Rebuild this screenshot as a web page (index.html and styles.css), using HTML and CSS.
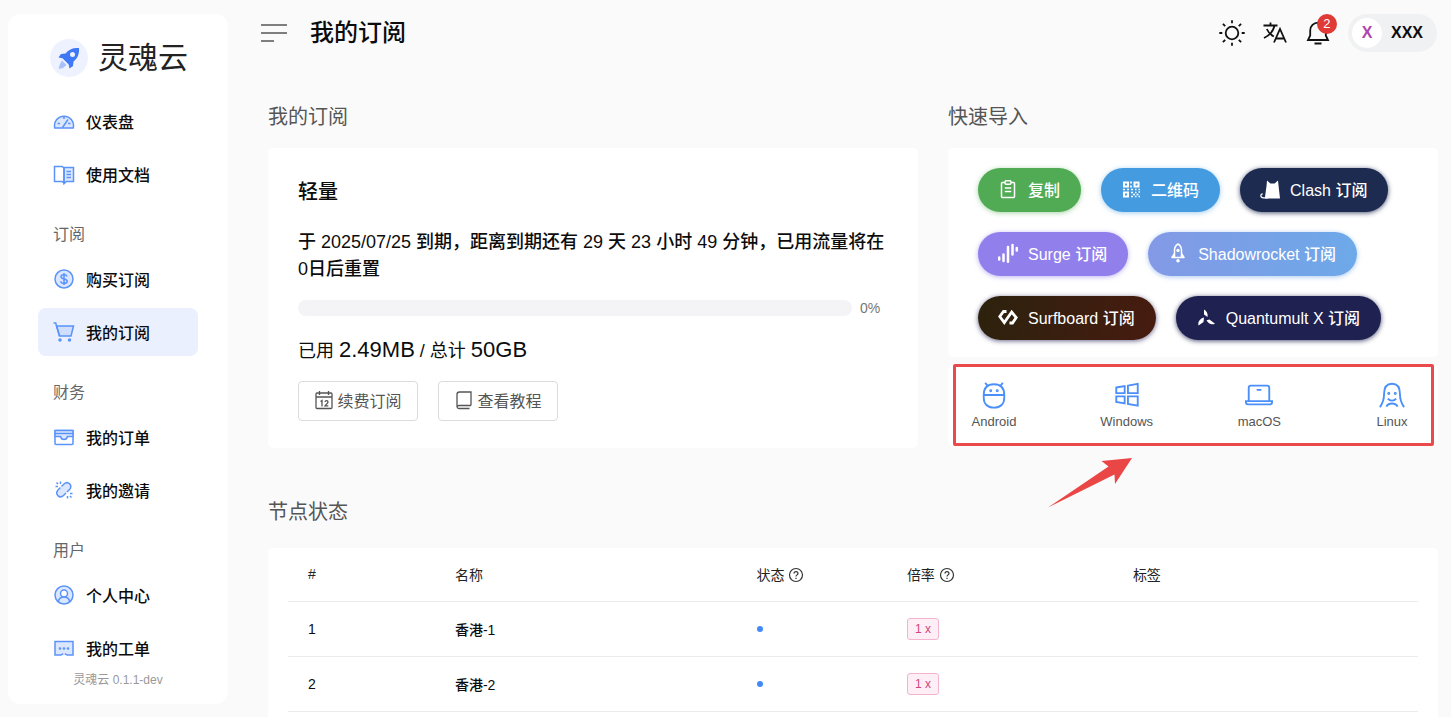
FILE: index.html
```
<!DOCTYPE html>
<html lang="zh-CN">
  <head>
    <meta charset="UTF-8" />
    <meta name="viewport" content="width=device-width, initial-scale=1.0" />
    <title>我的订阅 - 灵魂云</title>
    <link rel="stylesheet" href="styles.css">
  </head>
  <body>
    <div class="app">
      <aside class="sidebar">
        <div class="brand">
          <span class="brand-logo">
            <svg width="24" height="24" viewBox="0 0 24 24">
              <path d="M22 2C16 1.500 11.500 3.500 8.500 7.500L4 8l-2.500 3.500 4 .8L11.700 18.500l.8 4L16 20l.5-4.500C20.500 12.500 22.500 8 22 2z" fill="#3f78f5" />
              <circle cx="15.500" cy="8.500" r="2.500" fill="#eef2fe" />
              <path d="M5 14.500l4.500 4.500L6 22l-4.500 1L3 18z" fill="#a9c1fb" />
            </svg>
          </span>
          <span class="brand-name">灵魂云</span>
        </div>

        <nav class="menu">
          <a class="menu-item" href="#">
            <svg class="menu-icon" viewBox="0 0 22 22">
              <path d="M1.800 18a9.500 9.500 0 1 1 18.400 0z" />
              <path d="M11 6v3M4.500 13.500h2.500M15 13.500h2.500M9.500 17.500l5.500-8" />
            </svg>
            仪表盘
          </a>
          <a class="menu-item" href="#">
            <svg class="menu-icon" viewBox="0 0 22 22">
              <path d="M11 4.500h9.500v14h-7L11 20.500z" />
              <path d="M1.500 3.500h7.500l2 1.500v15l-2-1.500H1.500z" fill="none" />
              <path d="M13.500 8.500h4.500M13.500 11.500h4.500M13.500 14.500h4.500" />
            </svg>
            使用文档
          </a>

          <h3 class="menu-group">订阅</h3>
          <a class="menu-item" href="#">
            <svg class="menu-icon" viewBox="0 0 22 22">
              <circle cx="11" cy="11" r="9" />
              <path d="M14 8.500c-.3-1.200-1.400-1.800-3-1.800-1.800 0-3 .8-3 2.100 0 3 6.200 1.400 6.200 4.400 0 1.300-1.300 2.200-3.200 2.200s-3-.8-3.300-2.100M11 5v12" fill="none" />
            </svg>
            购买订阅
          </a>
          <a class="menu-item active" href="#" aria-current="page">
            <svg class="menu-icon" viewBox="0 0 22 22">
              <path class="basket" d="M3.500 5h17l-2.500 10H6.500z" />
              <path d="M.5 2h2.200L6.500 15" fill="none" />
              <circle class="solid" cx="7" cy="19" r="1" />
              <circle class="solid" cx="16.500" cy="19" r="1" />
            </svg>
            我的订阅
          </a>

          <h3 class="menu-group">财务</h3>
          <a class="menu-item" href="#">
            <svg class="menu-icon" viewBox="0 0 22 22">
              <rect x="2" y="4.500" width="18" height="14" rx="1" fill="none" />
              <path d="M2 4.500h18v6h-5.500c-.5 2-1.800 3-3.500 3s-3-1-3.500-3H2zM2 7.500h18" />
            </svg>
            我的订单
          </a>
          <a class="menu-item" href="#">
            <svg class="menu-icon" viewBox="0 0 22 22">
              <path class="link-fill" d="M6 16L16 6" />
              <path d="M8.500 7.500l2.500-2.500c4-3.600 9 1.400 5.500 5.500l-2.500 2.500M13 14l-2.500 2.500c-4 3.600-9-1.400-5.500-5.500l2.500-2.500" fill="none" />
              <path d="M7.500 2.500v2.500M2.500 7.500H5M14.500 19.500V17M19.500 14.500H17M18.500 18.500l-1.500-1.500M3.500 3.500L5 5" />
            </svg>
            我的邀请
          </a>

          <h3 class="menu-group">用户</h3>
          <a class="menu-item" href="#">
            <svg class="menu-icon" viewBox="0 0 22 22">
              <circle cx="11" cy="11" r="9" />
              <circle cx="11" cy="9.500" r="3.500" fill="#ffffff" />
              <path d="M5.200 17.800c.6-2.900 2.800-4.800 5.800-4.800s5.200 1.900 5.800 4.800" fill="none" />
            </svg>
            个人中心
          </a>
          <a class="menu-item" href="#">
            <svg class="menu-icon" viewBox="0 0 22 22">
              <path d="M8.500 18H2V4.500h18V18h-6.500M8.500 18l1.500-1.500M13.500 18L12 16.500" />
              <circle class="solid" cx="7" cy="11.500" r=".6" />
              <circle class="solid" cx="11" cy="11.500" r=".6" />
              <circle class="solid" cx="15" cy="11.500" r=".6" />
            </svg>
            我的工单
          </a>
        </nav>
        <p class="version">灵魂云 0.1.1-dev</p>
      </aside>

      <div class="main">
        <header class="topbar">
          <button class="icon-btn" aria-label="折叠菜单">
            <svg width="26" height="20" viewBox="0 0 26 20" fill="none" stroke="#555" stroke-width="1.500">
              <path d="M0 2h26M0 10h26M0 18h13" />
            </svg>
          </button>
          <h1 class="page-title">我的订阅</h1>
          <div class="tools">
            <button class="icon-btn" aria-label="切换主题">
              <svg class="tool-icon" viewBox="0 0 26 26">
                <circle cx="13" cy="13" r="6.300" />
                <path d="M13 .3v3M13 22.700v3M.3 13h3M22.700 13h3M3.900 3.900l2.300 2.300M19.800 19.800l2.300 2.300M22.100 3.900l-2.300 2.300M6.200 19.800l-2.300 2.300" />
              </svg>
            </button>
            <button class="icon-btn" aria-label="语言">
              <svg class="tool-icon" viewBox="0 0 26 26">
                <path d="M1.500 5.500h14M8.500 2.500v3M12.500 5.500c-1 5-4.500 9.500-10.500 12.500M4.800 9c1.500 3.500 4 5.800 7 7.500M12 22.500l6-13.500 6 13.500M14 18.500h8" />
              </svg>
            </button>
            <button class="icon-btn bell" aria-label="通知">
              <svg class="tool-icon" viewBox="0 0 26 26">
                <path d="M3 20h20l-2.200-4.500V10.500a7.800 7.800 0 0 0-15.600 0v5zM9.500 23.500h7" />
              </svg>
              <span class="badge">2</span>
            </button>
            <button class="user">
              <span class="avatar">X</span>
              <span>XXX</span>
            </button>
          </div>
        </header>

        <main class="content">
          <div class="columns">
            <section>
              <h2 class="section-title">我的订阅</h2>
              <div class="card plan">
                <h3 class="plan-name">轻量</h3>
                <p class="plan-info">于 2025/07/25 到期，距离到期还有 29 天 23 小时 49 分钟，已用流量将在 0日后重置</p>
                <div class="usage">
                  <div class="usage-bar" role="progressbar" aria-valuenow="0" aria-valuemin="0" aria-valuemax="100"></div>
                  <span class="usage-percent">0%</span>
                </div>
                <p class="traffic">已用 <span>2.49MB</span> / 总计 <span>50GB</span></p>
                <div class="plan-actions">
                  <button class="outline-btn">
                    <svg width="20" height="20" viewBox="0 0 20 20" fill="none" stroke="currentColor" stroke-width="1.300">
                      <rect x="2" y="3" width="16" height="15.500" rx="1" />
                      <path d="M2 7h16M5.500 1v4M14.500 1v4M6.500 11.500l1.500-1v6M11 12c.3-1.800 3-1.600 3 0 0 1.200-2 2.300-3 3.900h3.300" />
                    </svg>
                    续费订阅
                  </button>
                  <button class="outline-btn">
                    <svg width="20" height="20" viewBox="0 0 20 20" fill="none" stroke="currentColor" stroke-width="1.300">
                      <path d="M17 15.500V2H5.500C4 2 3 3 3 4.500V17M17 15.500H5c-2.500 0-2.500 3 0 3h10.500" />
                    </svg>
                    查看教程
                  </button>
                </div>
              </div>
            </section>

            <section>
              <h2 class="section-title">快速导入</h2>
              <div class="card import">
                <button class="pill copy">
                  <svg width="20" height="20" viewBox="0 0 20 20" fill="none" stroke="currentColor" stroke-width="1.500">
                    <path d="M7 3.500H4.500a1 1 0 0 0-1 1v13a1 1 0 0 0 1 1h11a1 1 0 0 0 1-1v-13a1 1 0 0 0-1-1H13" />
                    <rect x="7" y="1.800" width="6" height="3.400" rx="1.200" />
                    <path d="M6.800 9h6.400M6.800 12.500h6.400" />
                  </svg>
                  复制
                </button>
                <button class="pill qrcode">
                  <svg width="20" height="20" viewBox="0 0 20 20" fill="none" stroke="currentColor" stroke-width="2">
                    <path d="M3 3.500h4v4H3zM13.500 3.500h4v4h-4zM3 13.500h4v4H3z" />
                    <path d="M10 2.500v2M10 6.500v2M2 10.500h2M6 10.500h2M10 10.500h2M14 10.500h1.500M17.500 10.500H19M10 13.500h2M14 13.500h1.500M12 15.500h2M15.500 15.500h2M10 17.500h2M14 17.500h1.500M17.500 17.500H19M17.500 13H19" stroke-width="1.700" />
                  </svg>
                  二维码
                </button>
                <button class="pill clash">
                  <svg width="20" height="20" viewBox="0 0 20 20">
                    <path d="M4.800 19.500L6.500 7 7 1.500l3.400 3h4.200L18 1.500l.6 5.500 1.400 12.500z" fill="currentColor" />
                    <path d="M8 18.800H3.500c-3.300 0-3.600-3.800-.8-4" fill="none" stroke="currentColor" stroke-width="1.200" />
                  </svg>
                  Clash 订阅
                </button>
                <button class="pill surge">
                  <svg width="20" height="20" viewBox="0 0 20 20" fill="none" stroke="currentColor" stroke-width="2.500" stroke-linecap="round">
                    <path d="M1.200 14.500v2M5.500 11.500v6.500M10 4v14.800M14.500 2v9.500M18.800 5v2.500" />
                  </svg>
                  Surge 订阅
                </button>
                <button class="pill shadowrocket">
                  <svg width="20" height="20" viewBox="0 0 20 20" fill="none" stroke="currentColor" stroke-width="1.500" stroke-linejoin="round">
                    <path d="M6.500 12.500V7c0-2.600 1.300-4.600 3.500-6 2.200 1.400 3.500 3.400 3.500 6v5.500M6.500 10.500L4 14.500h12l-2.500-4M6.500 10.500v4M13.500 10.500v4" />
                    <circle cx="10" cy="7.500" r="1" fill="currentColor" />
                    <circle cx="10" cy="17.800" r="1" fill="currentColor" />
                  </svg>
                  Shadowrocket 订阅
                </button>
                <button class="pill surfboard">
                  <svg width="20" height="20" viewBox="0 0 20 20" fill="none" stroke="currentColor" stroke-width="2.800">
                    <path d="M8.500 4.500H5.500L1.800 9.500l4.500 6L13.700 5l4.500 5.500-3.700 5.500h-3" />
                  </svg>
                  Surfboard 订阅
                </button>
                <button class="pill quantumult">
                  <svg width="20" height="20" viewBox="0 0 20 20" fill="currentColor">
                    <path d="M8 2.500c2.500 1.500 4 3.500 3.600 7.500L8 7.500zM8 10.500L7.500 15 2.500 18.500c-.8-3.800 1-6.500 5.500-8zM10.500 13.300l3-.8 5.500 4.200c-3.500 1.300-6.300.5-8.500-3.400z" />
                  </svg>
                  Quantumult X 订阅
                </button>
              </div>

              <div class="card platforms">
                <a class="platform" href="#">
                  <svg class="platform-icon" viewBox="0 0 30 30">
                    <path d="M4 15C4 7.500 8 3.500 15 3.500S26 7.500 26 15v3c0 6.500-4 10.500-11 10.500S4 24.500 4 18zM4 15h22M8.500 5.500L5.500 2M21.500 5.500l3-3.500" />
                    <circle class="solid" cx="11.500" cy="10.500" r=".6" />
                    <circle class="solid" cx="18.500" cy="10.500" r=".6" />
                  </svg>
                  Android
                </a>
                <a class="platform" href="#">
                  <svg class="platform-icon" viewBox="0 0 30 30">
                    <path d="M3.500 7l9-1.500V13h-9zM16 5l10.500-2v10H16zM3.500 16.500h9V24l-9-1.500zM16 16.500h10.500v10L16 24.500z" />
                  </svg>
                  Windows
                </a>
                <a class="platform" href="#">
                  <svg class="platform-icon" viewBox="0 0 30 30">
                    <path d="M4 21.500V7.500c0-1.500.8-2.500 2.300-2.500h17.400c1.500 0 2.300 1 2.300 2.500v14M1 21.500h28v1.300c0 1.500-.7 2.200-2.200 2.200H3.200C1.700 25 1 24.300 1 22.800zM12.500 9.500h5" />
                  </svg>
                  macOS
                </a>
                <a class="platform" href="#">
                  <svg class="platform-icon" viewBox="0 0 30 30">
                    <path d="M2 28c3-4 4.500-8.500 4.500-14C6.500 6.500 9.500 3 15 3s8.500 3.500 8.500 11c0 5.500 1.500 10 4.500 14M10.500 19c2.500 2.700 6.500 2.700 9 0M9 27.500c2-4.500 10-4.500 12 0" />
                    <circle class="solid" cx="11.500" cy="13.500" r=".6" />
                    <circle class="solid" cx="18.500" cy="13.500" r=".6" />
                  </svg>
                  Linux
                </a>
                <div class="highlight"></div>
                <svg class="arrow" width="84" height="50" viewBox="0 0 84 50">
                  <path d="M0 49.500L60.500 8.500 53.500 3 84 0 67 26 66.500 16.500z" fill="#ea4646" />
                </svg>
              </div>
            </section>
          </div>

          <section class="nodes">
            <h2 class="section-title">节点状态</h2>
            <div class="card node-card">
              <table class="node-table">
                <thead>
                  <tr>
                    <th class="col-id">#</th>
                    <th class="col-name">名称</th>
                    <th class="col-status">
                      状态
                      <svg class="help" viewBox="0 0 16 16">
                        <circle cx="8" cy="8" r="6.500" />
                        <path d="M6 6.500c0-2.600 4-2.600 4 0 0 1.300-2 1.500-2 3M8 10.800V12" />
                      </svg>
                    </th>
                    <th class="col-rate">
                      倍率
                      <svg class="help" viewBox="0 0 16 16">
                        <circle cx="8" cy="8" r="6.500" />
                        <path d="M6 6.500c0-2.600 4-2.600 4 0 0 1.300-2 1.500-2 3M8 10.800V12" />
                      </svg>
                    </th>
                    <th>标签</th>
                  </tr>
                </thead>
                <tbody>
                  <tr>
                    <td>1</td>
                    <td>香港-1</td>
                    <td><span class="dot"></span></td>
                    <td><span class="rate">1 x</span></td>
                    <td></td>
                  </tr>
                  <tr>
                    <td>2</td>
                    <td>香港-2</td>
                    <td><span class="dot"></span></td>
                    <td><span class="rate">1 x</span></td>
                    <td></td>
                  </tr>
                </tbody>
              </table>
            </div>
          </section>
        </main>
      </div>
    </div>
  </body>
</html>
```

FILE: styles.css
```
* {
  box-sizing: border-box;
}

body {
  margin: 0;
  font-family: "Liberation Sans", "Noto Sans CJK SC", sans-serif;
  font-size: 16px;
  color: #0c0c0d;
  background-color: #fafafb;
}

h1,
h2,
h3,
p {
  margin: 0;
  font-weight: 400;
}

button {
  font-family: inherit;
  font-size: 16px;
  cursor: pointer;
}

a {
  color: inherit;
  text-decoration: none;
}

svg {
  display: block;
  flex: none;
}

.app {
  display: flex;
  height: 100vh;
  overflow: hidden;
}

/* sidebar */
.sidebar {
  flex: none;
  display: flex;
  flex-direction: column;
  width: 220px;
  margin: 14px 0 13px 8px;
  background-color: #fff;
  border-radius: 12px;
}

.brand {
  flex: none;
  display: flex;
  align-items: center;
  gap: 10px;
  height: 83px;
  padding: 4px 0 0 42px;
}

.brand-logo {
  display: flex;
  align-items: center;
  justify-content: center;
  width: 38px;
  height: 38px;
  border-radius: 50%;
  background-color: #eef2fe;
}

.brand-name {
  font-size: 30px;
  line-height: 38px;
  color: #222;
}

.menu {
  padding: 0 30px;
}

.menu-item {
  display: flex;
  align-items: center;
  gap: 11px;
  height: 48px;
  margin-bottom: 5px;
  padding-left: 15px;
  border-radius: 8px;
  font-weight: 500;
}

.menu-item:last-child {
  margin-bottom: 0;
}

.menu-item.active {
  background-color: #ebf0fe;
}

.menu-icon {
  width: 22px;
  height: 22px;
  fill: #dbe7fe;
  stroke: #5b93fa;
  stroke-width: 1.5;
}

.basket {
  fill: #cfdefd;
}

.link-fill {
  stroke: #dbe7fe;
  stroke-width: 7;
}

.solid {
  fill: #5b93fa;
}

.menu-group {
  height: 52px;
  padding: 20px 0 0 15px;
  font-size: 16px;
  line-height: 24px;
  color: #666;
}

.version {
  margin-top: auto;
  padding-bottom: 17px;
  font-size: 12px;
  line-height: 14px;
  text-align: center;
  color: #999;
}

/* top bar */
.main {
  flex: 1;
  min-width: 0;
}

.topbar {
  display: flex;
  align-items: center;
  height: 66px;
  padding: 0 14px 0 33px;
}

.icon-btn {
  padding: 0;
  border: none;
  background: none;
}

.page-title {
  margin-left: 23px;
  font-size: 24px;
  font-weight: 500;
  line-height: 32px;
}

.tools {
  display: flex;
  align-items: center;
  gap: 17px;
  margin-left: auto;
}

.tool-icon {
  width: 26px;
  height: 26px;
  fill: none;
  stroke: #111;
  stroke-width: 1.8;
}

.bell {
  position: relative;
}

.badge {
  position: absolute;
  top: -6px;
  right: -6px;
  width: 20px;
  height: 20px;
  border-radius: 50%;
  font-size: 13px;
  line-height: 20px;
  text-align: center;
  color: #fff;
  background-color: #e03a36;
}

.user {
  display: flex;
  align-items: center;
  gap: 9px;
  height: 38px;
  padding: 0 14px 0 4px;
  border: none;
  border-radius: 19px;
  font-weight: 700;
  color: #0c0c0d;
  background-color: #f0f1f2;
}

.avatar {
  width: 30px;
  height: 30px;
  border-radius: 50%;
  line-height: 30px;
  color: #b044ae;
  background-color: #fff;
}

/* content */
.content {
  padding: 37px 13px 0 40px;
}

.columns {
  display: grid;
  grid-template-columns: 65fr 49fr;
  gap: 30px;
}

.section-title {
  margin-bottom: 17px;
  font-size: 20px;
  line-height: 28px;
  color: #555;
}

.card {
  background-color: #fff;
  border-radius: 5px;
}

.plan {
  padding: 30px 30px 27px;
}

.plan-name {
  font-size: 20px;
  font-weight: 500;
  line-height: 28px;
}

.plan-info {
  margin-top: 23px;
  font-size: 18px;
  font-weight: 500;
  line-height: 27px;
}

.usage {
  display: flex;
  align-items: center;
  gap: 8px;
  height: 16px;
  margin-top: 17px;
}

.usage-bar {
  flex: 1;
  height: 16px;
  border-radius: 8px;
  background-color: #f4f3f6;
}

.usage-percent {
  width: 28px;
  font-size: 14px;
  color: #777;
}

.traffic {
  margin-top: 18px;
  font-size: 18px;
  line-height: 32px;
}

.traffic span {
  font-size: 22px;
}

.plan-actions {
  display: flex;
  gap: 20px;
  margin-top: 14px;
}

.outline-btn {
  display: flex;
  align-items: center;
  justify-content: center;
  gap: 3px;
  width: 120px;
  height: 40px;
  padding: 0 0 2px;
  border: 1px solid #dcdce0;
  border-radius: 4px;
  color: #555;
  background-color: #fff;
}

.import {
  display: flex;
  flex-wrap: wrap;
  gap: 20px;
  padding: 20px 30px 17px;
}

.pill {
  display: flex;
  align-items: center;
  gap: 10px;
  height: 44px;
  padding: 0 21px 2px 20px;
  border: none;
  border-radius: 22px;
  font-weight: 500;
  white-space: nowrap;
  color: #fff;
}

.copy {
  background-color: #50ab54;
  box-shadow: 0 1px 5px rgba(80, 171, 84, 0.5);
}

.qrcode {
  background-color: #459bdf;
  box-shadow: 0 1px 5px rgba(69, 155, 223, 0.5);
}

.clash {
  background-color: #1d2b50;
  box-shadow: 0 1px 5px rgba(29, 43, 80, 0.8);
}

.surge {
  background-color: #9180ec;
  box-shadow: 0 1px 5px rgba(145, 128, 236, 0.6);
}

.shadowrocket {
  background: linear-gradient(90deg, #8399e6, #6da9e9);
  box-shadow: 0 1px 5px rgba(115, 163, 235, 0.6);
}

.surfboard {
  background: linear-gradient(100deg, #2c220d, #471b10);
  box-shadow: 0 1px 5px rgba(40, 35, 90, 0.7);
}

.quantumult {
  background-color: #1f2150;
  box-shadow: 0 1px 5px rgba(31, 33, 80, 0.8);
}

.platforms {
  position: relative;
  display: flex;
  justify-content: space-between;
  margin-top: 8px;
  padding: 16px 0 15px;
}

.platform {
  display: flex;
  flex-direction: column;
  align-items: center;
  gap: 4px;
  width: 92px;
  font-size: 13px;
  line-height: 18px;
  color: #555;
}

.platform-icon {
  width: 28px;
  height: 28px;
  fill: none;
  stroke: #4b8ffb;
  stroke-width: 2;
}

.highlight {
  position: absolute;
  inset: -1px 4px 0 5px;
  border: 3px solid #ea4a4c;
  border-radius: 2px;
  pointer-events: none;
}

.arrow {
  position: absolute;
  top: calc(100% + 12px);
  left: 100px;
}

/* node table */
.nodes {
  margin-top: 50px;
}

.nodes .section-title {
  margin-bottom: 22px;
}

.node-card {
  padding: 0 20px 20px;
}

.node-table {
  width: 100%;
  border-collapse: collapse;
  table-layout: fixed;
  font-size: 14px;
  font-weight: 500;
}

.node-table th,
.node-table td {
  height: 55px;
  padding: 0 20px;
  border-bottom: 1px solid #ececef;
  text-align: left;
}

.node-table th {
  height: 53px;
  font-weight: 400;
  color: #222;
}

.col-id {
  width: 13%;
}

.col-name {
  width: 26.7%;
}

.col-status {
  width: 13.3%;
}

.col-rate {
  width: 20%;
}

.help {
  display: inline-block;
  width: 16px;
  height: 16px;
  vertical-align: -3px;
  fill: none;
  stroke: #333;
  stroke-width: 1.2;
}

.dot {
  display: block;
  width: 6px;
  height: 6px;
  border-radius: 50%;
  background-color: #4389f7;
}

.rate {
  display: inline-block;
  padding: 0 7px;
  border: 1px solid #f3b4cf;
  border-radius: 3px;
  font-size: 12px;
  line-height: 20px;
  color: #d4447d;
  background-color: #fdeff5;
}
```
